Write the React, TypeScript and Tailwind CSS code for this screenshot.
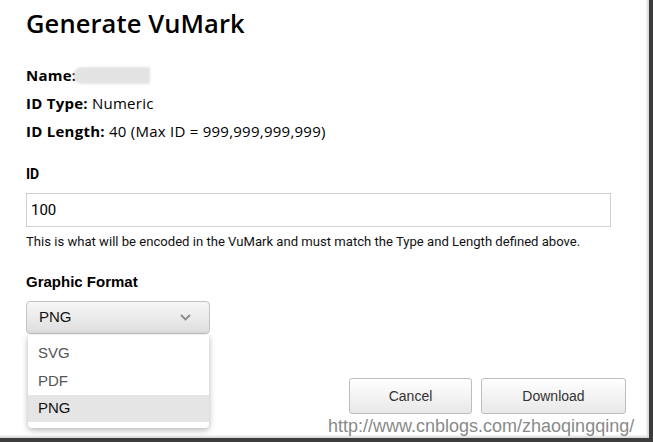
import React from "react";

export default function App() {
  return (
    <div className="relative w-[653px] h-[442px] bg-white overflow-hidden border-r-[4px] border-b-[4px] border-[#3c3c3c]">
      <div className="h-full shadow-[inset_-2px_-2px_2px_rgba(0,0,0,0.15)] flex flex-col pl-[26px] pr-[23px] pt-[8px] text-black" style={{ fontFamily: '"Open Sans", sans-serif' }}>
        <h1 className="text-[25.5px] leading-[30px] font-semibold tracking-[0.1px]">Generate VuMark</h1>

        <div className="mt-[23px] flex flex-col text-[15px] leading-[28px] tracking-[0.25px]">
          <div className="flex items-center">
            <span className="font-bold">Name:</span>
            <span className="ml-[-2px] h-[17px] w-[76px] bg-[#e3e3e3] rounded-l-[8px] blur-[1px]" />
          </div>
          <div>
            <span className="font-bold">ID Type:</span> Numeric
          </div>
          <div>
            <span className="font-bold">ID Length:</span> 40 (Max ID = 999,999,999,999)
          </div>
        </div>

        <div className="mt-[19px] text-[14px] leading-[20px] font-bold" style={{ fontFamily: 'Roboto, sans-serif' }}>ID</div>
        <div className="mt-[9px] w-[585px] h-[34px] border border-[#cfcfcf] flex items-center px-[4px] text-[15px]" style={{ fontFamily: 'Roboto, sans-serif' }}>100</div>
        <div className="mt-[7px] text-[13.1px] leading-[16px] text-[#111]" style={{ fontFamily: 'Roboto, sans-serif' }}>
          This is what will be encoded in the VuMark and must match the Type and Length defined above.
        </div>

        <div className="mt-[22px] text-[15px] leading-[20px] font-bold" style={{ fontFamily: '"Liberation Sans", Arial, sans-serif' }}>Graphic Format</div>
        <div className="mt-[9px] w-[184px] h-[33px] rounded-[4px] border border-[#c4c4c4] bg-gradient-to-b from-[#f7f7f7] to-[#dedede] flex items-center justify-between pl-[12px] pr-[18px] text-[15px] text-[#111]" style={{ fontFamily: '"Liberation Sans", Arial, sans-serif' }}>
          <span>PNG</span>
          <svg width="11" height="7" viewBox="0 0 11 7">
            <polyline points="1,1 5.5,5.5 10,1" fill="none" stroke="#8a8a8a" strokeWidth="1.8" />
          </svg>
        </div>

        <div className="mt-[44px] flex justify-end gap-[9px]" style={{ fontFamily: '"Liberation Sans", Arial, sans-serif' }}>
          <button className="w-[123px] h-[36px] rounded-[3px] border border-[#bdbdbd] bg-gradient-to-b from-white to-[#e8e8e8] text-[14px] text-[#333]">Cancel</button>
          <button className="w-[145px] h-[36px] rounded-[3px] border border-[#bdbdbd] bg-gradient-to-b from-white to-[#e8e8e8] text-[14px] text-[#333]">Download</button>
        </div>
      </div>

      <div className="absolute left-[28px] top-[335px] w-[181px] h-[93px] bg-white rounded-b-[4px] shadow-[0_2px_6px_rgba(0,0,0,0.3)] flex flex-col pt-[4px] text-[15px]" style={{ fontFamily: '"Liberation Sans", Arial, sans-serif' }}>
        <div className="h-[28px] flex items-center px-[10px] text-[#555]">SVG</div>
        <div className="h-[28px] flex items-center px-[10px] text-[#555]">PDF</div>
        <div className="h-[27px] flex items-center px-[10px] bg-[#e5e5e5] text-[#111]">PNG</div>
      </div>

      <div className="absolute left-[328px] top-[414px] text-[18px] leading-[24px] text-[#8a8a8a]" style={{ fontFamily: '"Liberation Sans", Arial, sans-serif' }}>
        http://www.cnblogs.com/zhaoqingqing/
      </div>
    </div>
  );
}
